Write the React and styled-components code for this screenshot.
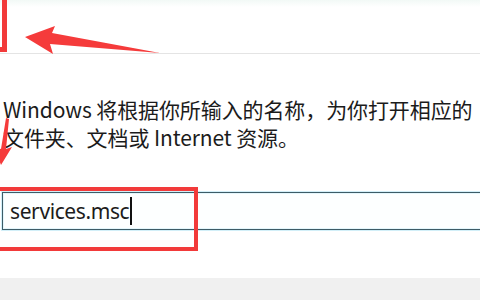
import React from 'react';
import styled, { createGlobalStyle } from "styled-components";

const Global = createGlobalStyle`
    html, body {
        margin: 0;
        padding: 0;
        background: #ffffff;
    }
    body {
        width: 480px;
        height: 300px;
        overflow: hidden;
        font-family: "Noto Sans CJK SC", "Noto Sans", sans-serif;
    }
`;

const Window = styled.div`
    position: relative;
    width: 480px;
    height: 300px;
    display: flex;
    flex-direction: column;
    overflow: hidden;
    background: #fff;
`;

const Header = styled.div`
    position: relative;
    height: 53px;
    flex-shrink: 0;
    border-bottom: 1px solid #e4e4e4;
    background: linear-gradient(#f2f9f6 0, #ffffff 7px);
`;

const Content = styled.div`
    position: relative;
    flex: 1;
    display: flex;
    flex-direction: column;
    gap: 41px;
    padding: 41px 0 0 3px;
`;

const Description = styled.p`
    margin: 0;
    font-size: 21px;
    line-height: 28px;
    color: #1b1b1b;
    white-space: nowrap;
    letter-spacing: -0.1px;
`;

const InputRow = styled.div`
    position: relative;
    margin-left: -1px;
`;

const InputBox = styled.div`
    height: 38px;
    width: 500px;
    box-sizing: border-box;
    border: 1px solid #3d5c67;
    box-shadow: 0 0 0 1px #d2eff8, inset 0 0 0 1px #e4f7fc;
    background: #fdffff;
    display: flex;
    align-items: center;
    padding-left: 7px;
    font-size: 21px;
    color: #1c1c1c;
    font-family: "Noto Sans", "Noto Sans CJK SC", sans-serif;
    letter-spacing: -0.4px;
`;

const Caret = styled.span`
    display: inline-block;
    width: 2px;
    height: 28px;
    margin-left: 1px;
    background: #111;
`;

// red annotation frames drawn over the screenshot
const Highlight = styled.div`
    position: absolute;
    top: ${p => p.$top}px;
    left: ${p => p.$left}px;
    width: ${p => p.$width}px;
    height: ${p => p.$height}px;
    border: ${p => p.$thick}px solid #f23a3a;
    box-sizing: border-box;
    pointer-events: none;
`;

const Arrow = styled.svg`
    position: absolute;
    left: 0;
    top: ${p => p.$top}px;
    overflow: visible;
`;

const Footer = styled.div`
    height: 22px;
    flex-shrink: 0;
    background: #f0f0f0;
`;

export default function App() {
    return (
        <>
            <Global />
            <Window>
                <Header>
                    <Highlight $top={-10} $left={-20} $width={27} $height={62} $thick={5} />
                    <Arrow $top={0} width="170" height="60" viewBox="0 0 170 60">
                        <polygon
                            points="25,37 55,26 52,33 160,53 50,44 53,54"
                            fill="#f53b3b"
                        />
                    </Arrow>
                </Header>
                <Content>
                    <Description>
                        Windows 将根据你所输入的名称，为你打开相应的
                        <br />
                        文件夹、文档或 Internet 资源。
                    </Description>
                    <Arrow $top={64} width="20" height="50" viewBox="0 0 20 50">
                        <polygon
                            points="1,47 -6,29 1,31 6,0 9,1 6,31 12,29"
                            fill="#f53b3b"
                        />
                    </Arrow>
                    <InputRow>
                        <InputBox>
                            services.msc<Caret />
                        </InputBox>
                        <Highlight $top={-5} $left={-10} $width={206} $height={64} $thick={4} />
                    </InputRow>
                </Content>
                <Footer />
            </Window>
        </>
    );
}
